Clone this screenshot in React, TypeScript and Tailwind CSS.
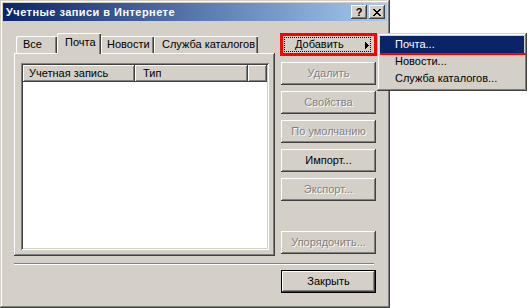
import React from "react";

const raised =
  "shadow-[inset_-1px_-1px_#404040,inset_1px_1px_#ffffff,inset_-2px_-2px_#808080,inset_2px_2px_#d4d0c8]";
const disabledText = "text-[#808080] [text-shadow:1px_1px_0_#ffffff]";

function Btn({ label, disabled }: { label: string; disabled?: boolean }) {
  return (
    <div
      className={`h-[23px] w-[95px] bg-[#d4d0c8] flex items-center justify-center text-[11px] ${raised} ${
        disabled ? disabledText : "text-black"
      }`}
    >
      {label}
    </div>
  );
}

export default function App() {
  return (
    <div className="relative w-[529px] h-[308px] bg-white font-['Liberation_Sans',Arial,sans-serif] text-[11px] leading-none select-none">
      {/* Window */}
      <div className="w-[390px] h-[308px] bg-[#d4d0c8] pt-[3px] px-[3px] shadow-[inset_-1px_-1px_#404040,inset_1px_1px_#d4d0c8,inset_-2px_-2px_#808080,inset_2px_2px_#ffffff]">
        {/* Title bar */}
        <div className="h-[18px] flex items-center bg-[linear-gradient(to_right,#0a246a,#a6caf0)] pl-[3px] pr-[2px]">
          <span className="text-white font-bold text-[11px] tracking-[0.45px]">Учетные записи в Интернете</span>
          <div className="ml-auto flex gap-[2px]">
            <div className={`w-[16px] h-[14px] bg-[#d4d0c8] flex items-center justify-center ${raised}`}>
              <span className="font-bold text-[11px] text-black">?</span>
            </div>
            <div className={`w-[16px] h-[14px] bg-[#d4d0c8] flex items-center justify-center ${raised}`}>
              <svg width="8" height="7" viewBox="0 0 8 7" shapeRendering="crispEdges">
                <path d="M0 0h2v1h-2zM6 0h2v1h-2zM1 1h2v1h-2zM5 1h2v1h-2zM2 2h4v1h-4zM3 3h2v1h-2zM2 4h4v1h-4zM1 5h2v1h-2zM5 5h2v1h-2zM0 6h2v1h-2zM6 6h2v1h-2z" fill="#000" />
              </svg>
            </div>
          </div>
        </div>

        {/* Body */}
        <div className="pl-[11px] pt-[12px]">
          <div className="flex gap-[6px]">
            {/* Tab control */}
            <div className="w-[261px] h-[223px] flex flex-col">
              <div className="h-[20px] flex items-end pl-[2px]">
                <div className="w-[41px] h-[17px] bg-[#d4d0c8] flex items-center pl-[7px] shadow-[inset_1px_1px_#ffffff,inset_-1px_0_#404040,inset_-2px_0_#808080] rounded-tl-[2px]">
                  Все
                </div>
                <div className="relative z-10 w-[44px] h-[21px] -mb-[1px] bg-[#d4d0c8] flex items-center pl-[8px] pb-[2px] shadow-[inset_1px_1px_#ffffff,inset_-1px_0_#404040,inset_-2px_0_#808080] rounded-tl-[2px]">
                  Почта
                </div>
                <div className="w-[53px] h-[17px] bg-[#d4d0c8] flex items-center pl-[6px] shadow-[inset_1px_1px_#ffffff,inset_-1px_0_#404040,inset_-2px_0_#808080]">
                  Новости
                </div>
                <div className="w-[104px] h-[17px] bg-[#d4d0c8] flex items-center pl-[8px] shadow-[inset_1px_1px_#ffffff,inset_-1px_0_#404040,inset_-2px_0_#808080]">
                  Служба каталогов
                </div>
              </div>
              <div className="flex-1 pl-[7px] pt-[10px] shadow-[inset_-1px_-1px_#404040,inset_1px_1px_#ffffff,inset_-2px_-2px_#808080]">
                <div className="w-[248px] h-[187px] bg-white p-[2px] shadow-[inset_1px_1px_#808080,inset_-1px_-1px_#ffffff,inset_2px_2px_#404040,inset_-2px_-2px_#d4d0c8]">
                  <div className="h-[17px] flex bg-[#d4d0c8]">
                    <div className="w-[112px] flex items-center pl-[6px] shadow-[inset_-1px_-1px_#404040,inset_1px_1px_#ffffff,inset_-2px_-2px_#808080]">
                      Учетная запись
                    </div>
                    <div className="w-[113px] flex items-center pl-[8px] shadow-[inset_-1px_-1px_#404040,inset_1px_1px_#ffffff,inset_-2px_-2px_#808080]">
                      Тип
                    </div>
                    <div className="flex-1 shadow-[inset_-1px_-1px_#404040,inset_1px_1px_#ffffff,inset_-2px_-2px_#808080]" />
                  </div>
                </div>
              </div>
            </div>

            {/* Buttons column */}
            <div className="w-[95px] h-[221px] flex flex-col justify-between">
              <div className="flex flex-col gap-[6px]">
                <div className="-mx-[1px] w-[97px] h-[23px] border-[3px] border-[#ff0000] bg-[#d4d0c8] p-[1px]">
                  <div className="relative h-full w-[87px] border border-dotted border-black flex items-center pl-[10px]">
                    <span>
                      <span className="underline underline-offset-[1px]">Д</span>обавить
                    </span>
                    <svg className="absolute right-[1px] top-[4px]" width="4" height="7" viewBox="0 0 4 7" shapeRendering="crispEdges">
                      <path d="M0 0h1v7h-1zM1 1h1v5h-1zM2 2h1v3h-1zM3 3h1v1h-1z" fill="#000" />
                    </svg>
                  </div>
                </div>
                <Btn label="Удалить" disabled />
                <Btn label="Свойства" disabled />
                <Btn label="По умолчанию" disabled />
                <Btn label="Импорт..." />
                <Btn label="Экспорт..." disabled />
              </div>
              <Btn label="Упорядочить..." disabled />
            </div>
          </div>

          {/* Separator */}
          <div className="mt-[7px] w-[360px] h-[2px] border-t border-[#808080] border-b border-b-white" />

          {/* Close */}
          <div className="mt-[5px] ml-[267px]">
            <div className="h-[23px] w-[95px] bg-[#d4d0c8] flex items-center justify-center text-black shadow-[inset_0_0_0_1px_#000000,inset_-2px_-2px_#404040,inset_2px_2px_#ffffff,inset_-3px_-3px_#808080]">
              Закрыть
            </div>
          </div>
        </div>
      </div>

      {/* Popup menu */}
      <div className="absolute left-[377px] top-[33px] w-[150px] h-[58px] bg-[#d4d0c8] p-[3px] shadow-[inset_-1px_-1px_#404040,inset_1px_1px_#d4d0c8,inset_-2px_-2px_#808080,inset_2px_2px_#ffffff]">
        <div className="h-[17px] bg-[#0a246a] text-white flex items-center pl-[15px]">Почта...</div>
        <div className="h-[17px] flex items-center pl-[15px] text-black">Новости...</div>
        <div className="h-[17px] flex items-center pl-[15px] text-black">Служба каталогов...</div>
      </div>
      <div className="absolute left-[380px] top-[53px] w-[146px] h-[2px] bg-[#ff0000]" />
    </div>
  );
}
